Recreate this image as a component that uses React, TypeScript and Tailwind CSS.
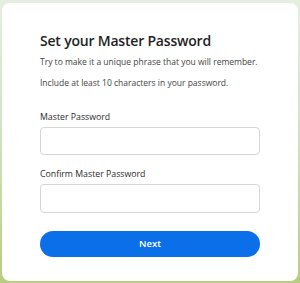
export default function App() {
  return (
    <div className="h-[283px] w-[300px] bg-linear-to-b from-[#e4efdf] via-[#d0e1bf] to-[#b9cd80] pt-[3px] pl-[2px] pr-[2px] pb-[2px]">
      <div
        className="
          h-[278px] w-[296px] rounded-[8px] bg-white
          px-[38px] pt-[28px]
          font-['Open_Sans',sans-serif]
        "
      >
        <h1 className="text-[14px] leading-[20px] font-semibold tracking-[-0.2px] text-[#1f1f1f]">
          Set your Master Password
        </h1>
        <p className="mt-[4px] text-[8.5px] leading-[14px] text-[#444]">
          Try to make it a unique phrase that you will remember.
        </p>
        <p className="mt-[7px] text-[8.5px] leading-[14px] text-[#444]">
          Include at least 10 characters in your password.
        </p>

        <label className="mt-[20px] block text-[8.75px] leading-[14px] font-medium text-[#2b2b2b]">
          Master Password
        </label>
        <input
          type="password"
          className="mt-[3px] block h-[28px] w-[220px] rounded-[4px] border border-[#d6d6d6] bg-white outline-none"
        />

        <label className="mt-[12px] block text-[8.75px] leading-[14px] font-medium text-[#2b2b2b]">
          Confirm Master Password
        </label>
        <input
          type="password"
          className="mt-[3px] block h-[29px] w-[220px] rounded-[4px] border border-[#d6d6d6] bg-white outline-none"
        />

        <button
          type="button"
          className="mt-[18px] flex h-[26px] w-[220px] items-center justify-center rounded-full bg-[#0a6fe8] text-[9.5px] font-semibold text-white"
        >
          Next
        </button>
      </div>
    </div>
  );
}
